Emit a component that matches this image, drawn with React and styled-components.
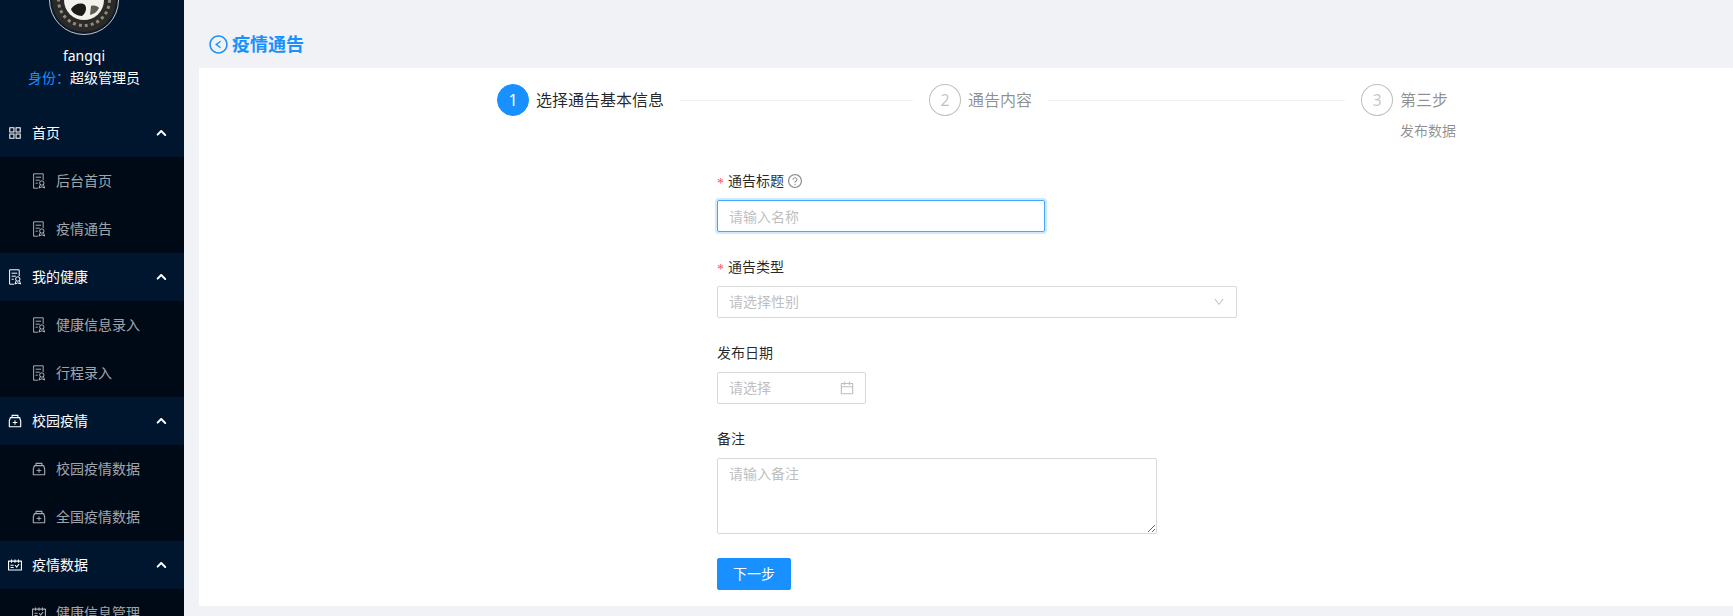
import styled, { createGlobalStyle } from "styled-components";
import {
  AiOutlineAppstore,
  AiOutlineMedicineBox,
  AiOutlineSchedule,
  AiOutlineLeftCircle,
  AiOutlineQuestionCircle,
  AiOutlineDown,
  AiOutlineCalendar,
} from "react-icons/ai";

// document with a ribbon, the package's audit icon is too square for this one
function DocIcon() {
  return (
    <svg viewBox="0 0 16 16" fill="none" stroke="currentColor" strokeWidth="1" aria-hidden="true">
      <path d="M12.2 7V.8H2.6v14.4h4.6" />
      <path d="M4.6 4.2h5.6M4.6 7.2h4.2M4.6 10.2h2.2" />
      <circle cx="10.8" cy="10" r="2.2" />
      <path d="M9.2 11.6 8 15l2.8-1.2 2.8 1.2-1.2-3.4" />
    </svg>
  );
}

const menu = [
  {
    title: "首页",
    icon: AiOutlineAppstore,
    subIcon: DocIcon,
    items: ["后台首页", "疫情通告"],
  },
  {
    title: "我的健康",
    icon: DocIcon,
    subIcon: DocIcon,
    items: ["健康信息录入", "行程录入"],
  },
  {
    title: "校园疫情",
    icon: AiOutlineMedicineBox,
    subIcon: AiOutlineMedicineBox,
    items: ["校园疫情数据", "全国疫情数据"],
  },
  {
    title: "疫情数据",
    icon: AiOutlineSchedule,
    subIcon: AiOutlineSchedule,
    items: ["健康信息管理"],
  },
];

const steps = [
  { num: 1, title: "选择通告基本信息", active: true },
  { num: 2, title: "通告内容" },
  { num: 3, title: "第三步", desc: "发布数据", last: true },
];

export default function App() {
  return (
    <>
      <GlobalStyle />
      <Shell>
        <Sidebar>
          <UserBlock>
            <Logo viewBox="0 0 70 70" aria-hidden="true">
              <circle cx="35" cy="35" r="34.5" fill="#0b1a2e" stroke="#c9c9c4" strokeWidth="1" />
              <circle cx="35" cy="35" r="32" fill="#2b2a27" />
              <circle
                cx="35"
                cy="35"
                r="25.5"
                fill="none"
                stroke="#8d8a80"
                strokeWidth="3"
                strokeDasharray="3 3"
              />
              <circle cx="35" cy="35" r="20" fill="#f2f1ec" />
              <path d="M22 44c3-5 10-7 14-4 2 3 1 8-3 11-5 0-10-3-11-7z" fill="#1c1b19" />
              <path d="M42 41c3-1 7 0 8 2-2 4-5 6-9 7z" fill="#5c5a52" />
            </Logo>
            <UserName>fangqi</UserName>
            <UserRole>
              <RoleLabel>身份：</RoleLabel>超级管理员
            </UserRole>
          </UserBlock>
          <Menu>
            {menu.map((group) => (
              <li key={group.title}>
                <MenuHeader>
                  <group.icon />
                  <MenuTitle>{group.title}</MenuTitle>
                  <Arrow />
                </MenuHeader>
                <SubMenu>
                  {group.items.map((item) => (
                    <SubItem key={item}>
                      <group.subIcon />
                      <span>{item}</span>
                    </SubItem>
                  ))}
                </SubMenu>
              </li>
            ))}
          </Menu>
        </Sidebar>
        <Main>
          <PageTitle>
            <AiOutlineLeftCircle />
            <span>疫情通告</span>
          </PageTitle>
          <Card>
            <Steps>
              {steps.map((step) => (
                <Step key={step.num} $last={step.last}>
                  <StepCircle $active={step.active}>{step.num}</StepCircle>
                  <StepBody>
                    <StepHead>
                      <StepTitle $active={step.active}>{step.title}</StepTitle>
                      {!step.last && <StepLine />}
                    </StepHead>
                    {step.desc && <StepDesc>{step.desc}</StepDesc>}
                  </StepBody>
                </Step>
              ))}
            </Steps>
            <Form onSubmit={(e) => e.preventDefault()}>
              <Field>
                <Label $required>
                  通告标题
                  <HelpIcon>
                    <AiOutlineQuestionCircle />
                  </HelpIcon>
                </Label>
                <TextInput $focused $width={328} placeholder="请输入名称" />
              </Field>
              <Field>
                <Label $required>通告类型</Label>
                <SelectBox>
                  <span>请选择性别</span>
                  <AiOutlineDown />
                </SelectBox>
              </Field>
              <Field>
                <Label>发布日期</Label>
                <DateBox>
                  <DateInput placeholder="请选择" />
                  <AiOutlineCalendar />
                </DateBox>
              </Field>
              <Field>
                <Label>备注</Label>
                <TextArea rows={3} placeholder="请输入备注" />
              </Field>
              <NextButton type="submit">下一步</NextButton>
            </Form>
          </Card>
        </Main>
      </Shell>
    </>
  );
}

const GlobalStyle = createGlobalStyle`
  * {
    box-sizing: border-box;
  }

  body {
    margin: 0;
    font-family: "Noto Sans", "Noto Sans CJK SC", sans-serif;
    font-size: 14px;
    line-height: 22px;
    color: rgba(0, 0, 0, 0.85);
    background: #f0f2f5;
  }
`;

const Shell = styled.div`
  display: flex;
  height: 616px;
  overflow: hidden;
`;

const Sidebar = styled.aside`
  flex: 0 0 184px;
  height: 616px;
  overflow: hidden;
  background: #00152e;
  color: #fff;
`;

const UserBlock = styled.div`
  width: 168px;
  text-align: center;
`;

const Logo = styled.svg`
  display: block;
  width: 70px;
  height: 70px;
  margin: -35px auto 0;
`;

const UserName = styled.div`
  margin-top: 10px;
  height: 22px;
  line-height: 22px;
`;

const UserRole = styled.div`
  height: 22px;
  line-height: 22px;
`;

const RoleLabel = styled.span`
  color: #1890ff;
`;

const Menu = styled.ul`
  list-style: none;
  margin: 20px 0 0;
  padding: 0;
`;

const MenuHeader = styled.div`
  display: flex;
  align-items: center;
  height: 48px;
  padding: 0 18px 0 7px;
  background: #00152e;
  color: #fff;

  svg {
    flex: none;
    width: 16px;
    height: 16px;
    margin-right: 9px;
  }
`;

const MenuTitle = styled.span`
  flex: 1;
`;

const Arrow = styled.i`
  position: relative;
  width: 10px;
  height: 6px;

  &::before,
  &::after {
    content: "";
    position: absolute;
    top: 2px;
    width: 6.5px;
    height: 2px;
    border-radius: 2px;
    background: #fff;
  }

  &::before {
    left: 0;
    transform: rotate(-45deg);
  }

  &::after {
    right: 0;
    transform: rotate(45deg);
  }
`;

const SubMenu = styled.ul`
  list-style: none;
  margin: 0;
  padding: 0;
  background: #000a17;
`;

const SubItem = styled.li`
  display: flex;
  align-items: center;
  height: 48px;
  padding-left: 31px;
  color: rgba(255, 255, 255, 0.65);

  svg {
    flex: none;
    width: 16px;
    height: 16px;
    margin-right: 9px;
  }
`;

const Main = styled.main`
  flex: 1;
  min-width: 0;
  padding: 33px 0 10px 15px;
  display: flex;
  flex-direction: column;
`;

const PageTitle = styled.h2`
  display: flex;
  align-items: center;
  gap: 3px;
  height: 22px;
  margin: 0 0 13px;
  padding-left: 9px;
  font-size: 18px;
  font-weight: 700;
  color: #1890ff;

  svg {
    font-size: 21px;
  }
`;

const Card = styled.section`
  flex: 1;
  background: #fff;
`;

const Steps = styled.div`
  display: flex;
  height: 64px;
  padding: 16px 0 0 298px;
`;

const Step = styled.div`
  display: flex;
  flex: ${(p) => (p.$last ? "0 0 auto" : "0 0 416px")};
  margin-right: 16px;
`;

const StepCircle = styled.div`
  flex: 0 0 32px;
  height: 32px;
  margin-right: 7px;
  border-radius: 50%;
  border: 1px solid ${(p) => (p.$active ? "#1890ff" : "rgba(0, 0, 0, 0.25)")};
  background: ${(p) => (p.$active ? "#1890ff" : "#fff")};
  color: ${(p) => (p.$active ? "#fff" : "rgba(0, 0, 0, 0.25)")};
  font-size: 16px;
  line-height: 30px;
  text-align: center;
`;

const StepBody = styled.div`
  flex: 1;
`;

const StepHead = styled.div`
  display: flex;
  align-items: center;
  height: 32px;
`;

const StepTitle = styled.span`
  font-size: 16px;
  white-space: nowrap;
  color: ${(p) => (p.$active ? "rgba(0, 0, 0, 0.85)" : "rgba(0, 0, 0, 0.45)")};
`;

const StepLine = styled.div`
  flex: 1;
  height: 1px;
  margin-left: 16px;
  background: #f0f0f0;
`;

const StepDesc = styled.div`
  color: rgba(0, 0, 0, 0.45);
  line-height: 22px;
  margin-top: 4px;
`;

const Form = styled.form`
  padding: 38px 0 0 518px;
`;

const Field = styled.div`
  margin-bottom: 24px;
`;

const Label = styled.label`
  display: flex;
  align-items: center;
  height: 22px;
  margin-bottom: 8px;
  color: rgba(0, 0, 0, 0.85);

  ${(p) =>
    p.$required &&
    `
    &::before {
      content: "*";
      margin-right: 4px;
      width: 7px;
      color: #ff4d4f;
      font-family: "Liberation Serif", serif;
      font-size: 14px;
      transform: translateY(3px);
    }
  `}
`;

const HelpIcon = styled.span`
  display: inline-flex;
  margin-left: 3px;
  font-size: 16px;
  color: rgba(0, 0, 0, 0.45);
`;

const TextInput = styled.input`
  display: block;
  width: ${(p) => p.$width}px;
  height: 32px;
  padding: 4px 11px;
  border: 1px solid ${(p) => (p.$focused ? "#40a9ff" : "#d9d9d9")};
  border-radius: 2px;
  box-shadow: ${(p) => (p.$focused ? "0 0 0 2px rgba(24, 144, 255, 0.2)" : "none")};
  outline: none;
  font: inherit;

  &::placeholder {
    color: #bfbfbf;
  }
`;

const SelectBox = styled.div`
  display: flex;
  align-items: center;
  justify-content: space-between;
  width: 520px;
  height: 32px;
  padding: 0 11px;
  border: 1px solid #d9d9d9;
  border-radius: 2px;
  color: #bfbfbf;

  svg {
    font-size: 12px;
  }
`;

const DateBox = styled.div`
  display: flex;
  align-items: center;
  width: 149px;
  height: 32px;
  padding: 0 10px 0 11px;
  border: 1px solid #d9d9d9;
  border-radius: 2px;
  color: #bfbfbf;

  svg {
    flex: none;
    font-size: 16px;
  }
`;

const DateInput = styled.input`
  flex: 1;
  min-width: 0;
  padding: 0;
  border: none;
  outline: none;
  font: inherit;

  &::placeholder {
    color: #bfbfbf;
  }
`;

const TextArea = styled.textarea`
  display: block;
  width: 440px;
  height: 76px;
  padding: 4px 11px;
  border: 1px solid #d9d9d9;
  border-radius: 2px;
  outline: none;
  font: inherit;

  &::placeholder {
    color: #bfbfbf;
  }
`;

const NextButton = styled.button`
  display: block;
  height: 32px;
  padding: 4px 15px;
  border: 1px solid #1890ff;
  border-radius: 2px;
  background: #1890ff;
  color: #fff;
  font: inherit;
`;
